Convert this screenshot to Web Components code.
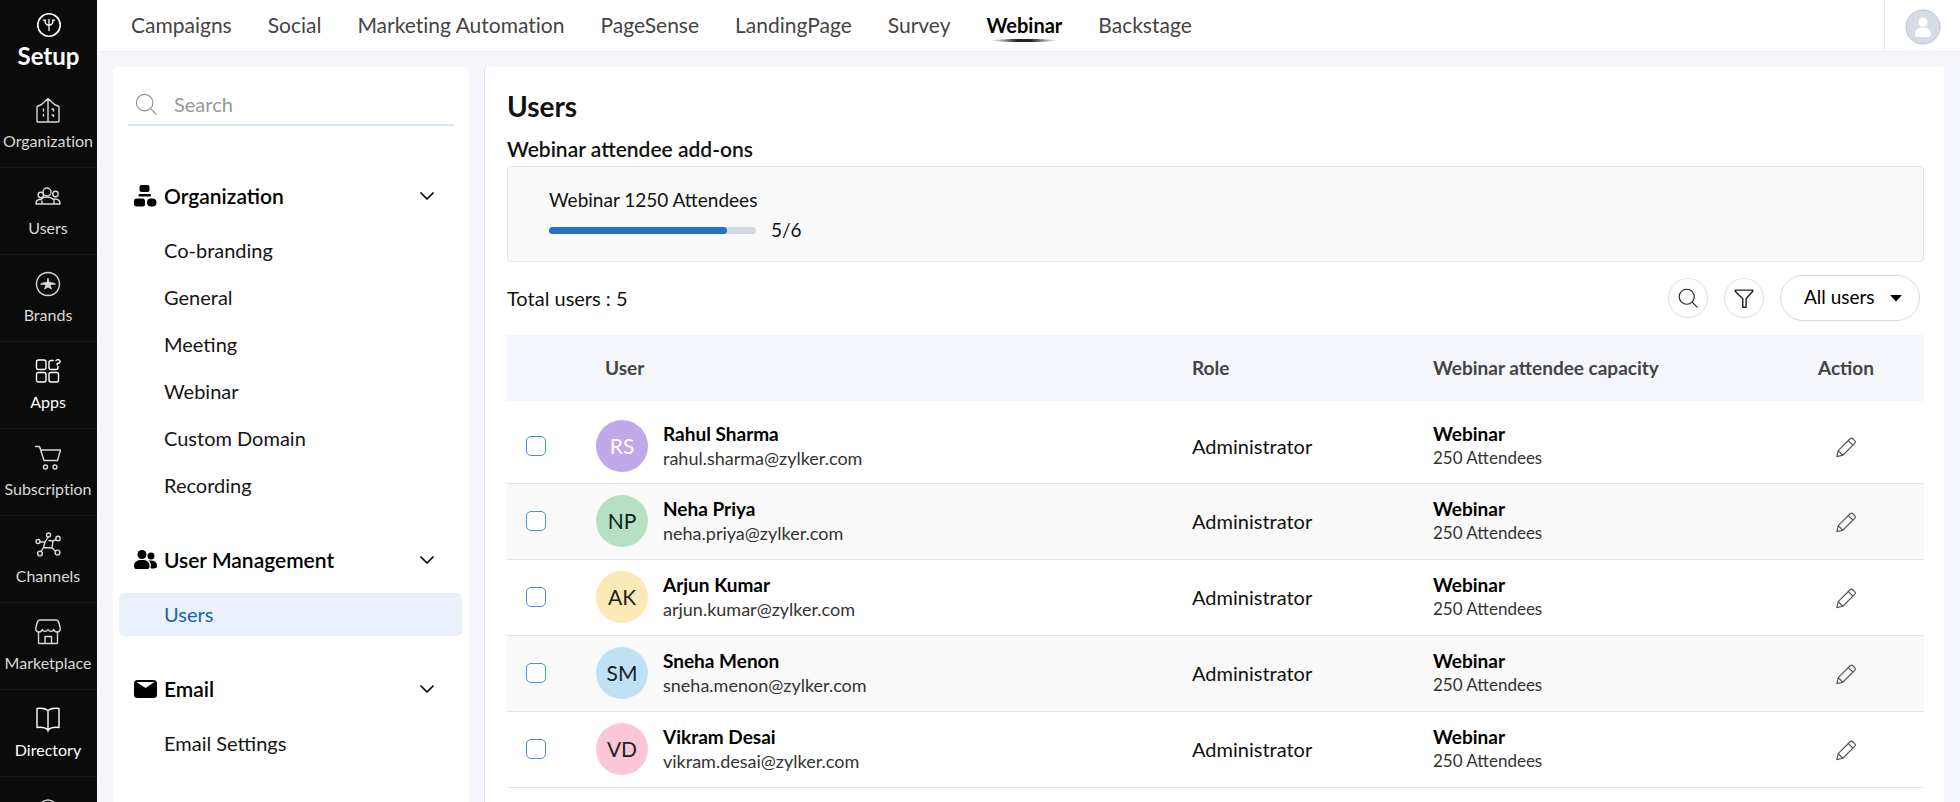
<!DOCTYPE html>
<html lang="en">
<head>
<meta charset="utf-8">
<title>Setup - Users</title>
<style>
    body{
        margin:0;
        background:#f4f6fb;
        color:#111;
        font-family:Lato, "Liberation Sans", sans-serif;
        font-size:20px;
        line-height:24px;
    }
</style>
</head>
<body>
<setup-app>
    <side-rail slot="rail">
        <rail-item icon="organization">Organization</rail-item>
        <rail-item icon="users">Users</rail-item>
        <rail-item icon="brands">Brands</rail-item>
        <rail-item icon="apps" bright>Apps</rail-item>
        <rail-item icon="cart">Subscription</rail-item>
        <rail-item icon="channels">Channels</rail-item>
        <rail-item icon="store">Marketplace</rail-item>
        <rail-item icon="book" bright>Directory</rail-item>
        <rail-item icon="ring"></rail-item>
    </side-rail>
    <top-bar slot="top">
        <top-link>Campaigns</top-link>
        <top-link>Social</top-link>
        <top-link>Marketing Automation</top-link>
        <top-link>PageSense</top-link>
        <top-link>LandingPage</top-link>
        <top-link>Survey</top-link>
        <top-link current>Webinar</top-link>
        <top-link>Backstage</top-link>
    </top-bar>
    <side-menu slot="menu">
        <menu-section icon="sitemap" heading="Organization">
            <menu-link>Co-branding</menu-link>
            <menu-link>General</menu-link>
            <menu-link>Meeting</menu-link>
            <menu-link>Webinar</menu-link>
            <menu-link>Custom Domain</menu-link>
            <menu-link>Recording</menu-link>
        </menu-section>
        <menu-section icon="people" heading="User Management">
            <menu-link current>Users</menu-link>
        </menu-section>
        <menu-section icon="mail" heading="Email">
            <menu-link>Email Settings</menu-link>
        </menu-section>
    </side-menu>
    <users-page>
        <addon-card slot="addons" used="5" total="6">Webinar 1250 Attendees</addon-card>
        <users-toolbar slot="toolbar">Total users : 5</users-toolbar>
        <users-table slot="table"></users-table>
    </users-page>
</setup-app>

<script>
const icons = {
    logo:['0 0 24 24', 24, `<circle cx="12" cy="12" r="11.2" stroke-width="1.6"/><path d="M12 6.500v11M8 7.500c0 3 1.500 4.500 4 5 2.500-.5 4-2 4-5M6.500 7.200h2M15.500 7.200h2" stroke-width="1.300"/>`],
    organization:['0 0 26 26', 26, `<path d="M2 9.500 6.500 7.500 13 1.500l6.500 6L24 9.500V24a1 1 0 0 1-1 1H3a1 1 0 0 1-1-1zM13 2v23"/><path d="M8.500 12v2M8.500 17.500v1.500M17 12h1.500v2M17 18h1.500v1.500"/>`],
    users:['0 0 26 26', 26, `<circle cx="12" cy="8" r="4"/><circle cx="5.800" cy="11" r="2.700"/><circle cx="20.500" cy="10" r="2.700"/><path d="M4 15.500c-2 .5-3 2-3 4.500h24c0-2.500-1-4.500-4-5-1.500-.2-2 .2-3.200.2-1-1.500-3-2.200-5.800-2.200-3 0-5 1-6 2.500zM7 17v3M19 15v5"/>`],
    brands:['0 0 26 26', 26, `<circle cx="13" cy="13" r="11.500"/><path d="m13 7.500 1.300 4 4.200.5-3.500 2 1.500 4-3.500-2-3.500 2 1.500-4-3.500-2 4.200-.5z" fill="currentColor" stroke-width=".8"/><path d="M6 13h14"/>`],
    apps:['0 0 26 26', 26, `<rect x="1.500" y="2" width="9.500" height="9.500" rx="2"/><rect x="1.500" y="14.500" width="9.500" height="9.500" rx="2"/><rect x="14" y="14.500" width="9.500" height="9.500" rx="2"/><path d="M18 2.500h-2a2 2 0 0 0-2 2v5a2 2 0 0 0 2 2h5a2 2 0 0 0 2-2V8.500M21 2.500c2-1.800 4.500-.5 4 1.500-.3 1-1.500 1.500-2.800 1.500v1.500"/>`],
    cart:['0 0 26 26', 26, `<path d="M.5 1.500h4L9 15.500h13.500L25.500 5H6"/><circle cx="10.500" cy="22" r="2"/><circle cx="20" cy="22" r="2"/>`],
    channels:['0 0 26 26', 26, `<circle cx="13.500" cy="3" r="2"/><circle cx="3" cy="9.500" r="2"/><circle cx="23" cy="6.500" r="2.200"/><circle cx="5" cy="21.500" r="2.400"/><circle cx="22.500" cy="20.500" r="2.400"/><path d="M5 10h5l3-5M10 10l-1.500 5.500-2.500 4M8.500 15.500 17 16l3.500 3M17 16l1-7 3-1.500M18 9l-4-.5"/>`],
    store:['0 0 26 26', 26, `<path d="M5 1h16c2 0 2.500 1 3 3l1.300 5.500c0 2-1.300 3.500-3.300 3.500-1.500 0-2.800-.8-3.300-2.500-.7 1.700-1.500 2-2.700 2s-2.300-.8-3-2c-.7 1.200-1.800 2-3 2s-2-.3-2.700-2C6.800 12.200 5.500 13 4 13 2 13 .7 11.500.7 9.500L2 4c.5-2 1-3 3-3zM3.500 13v10.500a1 1 0 0 0 1 1h17a1 1 0 0 0 1-1V13M10 24.500v-7h6.500v7"/>`],
    book:['0 0 26 26', 26, `<path d="M13 4.500C10.500 2.500 6 2 2 2.500v19c4-.5 8.500 0 11 2.500 2.500-2.500 7-3 11-2.500v-19c-4-.5-8.500 0-11 2zM13 4.500v21"/>`],
    ring:['0 0 26 26', 26, `<circle cx="13" cy="16" r="9"/>`],
    search:['0 0 24 24', 24, `<circle cx="10.500" cy="10.500" r="9"/><path d="m17 17 6 6"/>`],
    filter:['0 0 24 24', 24, `<path d="M1.500 2.500h21v1.500L14.500 13v10h-4V13L1.500 4z" stroke-width="1.700"/>`],
    chevron:['0 0 14 14', 14, `<path d="m1 4 6 6 6-6" stroke-width="1.700"/>`],
    caret:['0 0 12 8', 12, `<path d="M0 1h12L6 7.500z" fill="currentColor" stroke="none"/>`],
    pencil:['0 0 24 24', 24, `<path d="M2 22.500 3.500 16 16.500 3a2 2 0 0 1 3 0l2 2a2 2 0 0 1 0 3L8.500 21zM14.500 5l5 5M3.500 16l5 5"/>`],
    sitemap:['0 0 24 24', 24, `<g fill="currentColor" stroke="none"><rect x="6.500" y="1" width="10" height="7" rx="2"/><rect x="5.500" y="10" width="12.500" height="2.500" rx="1"/><rect x="1" y="14.500" width="11" height="8" rx="2.500"/><rect x="14" y="14.500" width="9.500" height="8" rx="4"/></g>`],
    people:['0 0 24 24', 24, `<g fill="currentColor" stroke="none"><circle cx="9" cy="6.500" r="4.500"/><circle cx="18" cy="8" r="3.500"/><path d="M1 17.500c0-3.500 3-5.500 8-5.500s7.500 2 7.500 5.500-1 3.500-3 3.500H4c-2 0-3-.5-3-3.500z"/><path d="M15.500 12.500c5-.5 8.500 1 8.500 5 0 2.500-1 3-5.500 3-.5 0-1-.2-1-.5.800-3.500.3-5.500-2-7.500z"/></g>`],
    mail:['0 0 24 24', 24, `<rect x="1" y="3" width="23" height="18" rx="3.500" fill="currentColor" stroke="none"/><path d="M3.500 5h18L12.500 11z" fill="#fff" stroke="none"/>`],
    person:['0 0 36 36', 36, `<circle cx="18" cy="18" r="17" fill="#d6dbe6" stroke="#bcc2d0" stroke-width="1"/><circle cx="18" cy="13" r="4.500" fill="#fff" stroke="none"/><path d="M10 25c0-4 2.500-6.500 8-6.500s8 2.500 8 6.500c0 2-1 3-3 3H13c-2 0-3-1-3-3z" fill="#fff" stroke="none"/>`]
};

class AppIcon extends HTMLElement{
    connectedCallback(){
        if(this.shadowRoot) return;
        const [box, width, shape] = icons[this.getAttribute('name')];
        this.attachShadow({mode:'open'}).innerHTML = `
<style>
    :host{
        display:block;
        flex:none;
        width:var(--size, ${width}px);
    }
    svg{
        display:block;
        width:100%;
        fill:none;
        stroke:currentColor;
        stroke-width:var(--stroke, 1.4);
        stroke-linecap:round;
        stroke-linejoin:round;
    }
</style>
<svg viewBox="${box}" aria-hidden="true">${shape}</svg>
`;
    }
}

class SetupApp extends HTMLElement{
    constructor(){
        super();
        this.attachShadow({mode:'open'}).innerHTML = `
<style>
    :host{
        display:grid;
        grid-template-columns:98px minmax(0, 1fr);
        height:100vh;
    }
    .right{
        display:flex;
        flex-direction:column;
        min-height:0;
    }
    .content{
        flex:1;
        display:flex;
        gap:15px;
        min-height:0;
        padding:15px 16px 0 15px;
    }
</style>
<slot name="rail"></slot>
<div class="right">
    <slot name="top"></slot>
    <div class="content">
        <slot name="menu"></slot>
        <slot></slot>
    </div>
</div>
`;
    }
}

class SideRail extends HTMLElement{
    constructor(){
        super();
        this.attachShadow({mode:'open'}).innerHTML = `
<style>
    :host{
        display:block;
        overflow:hidden;
        background:#0b0b0b;
        color:#fff;
        border-right:1px solid #fff;
    }
    header{
        display:flex;
        flex-direction:column;
        align-items:center;
        gap:7px;
        height:68px;
        padding-top:13px;
        font-size:24px;
        font-weight:700;
    }
</style>
<header><app-icon name="logo"></app-icon>Setup</header>
<nav><slot></slot></nav>
`;
    }
}

class RailItem extends HTMLElement{
    constructor(){
        super();
        this.attachShadow({mode:'open'}).innerHTML = `
<style>
    :host{
        display:block;
        color:#d9d9d9;
        font-size:16px;
        line-height:20px;
        font-variant-ligatures:none;
        border-bottom:1px solid #171717;
    }
    :host([bright]){
        color:#fff;
    }
    a{
        display:flex;
        flex-direction:column;
        align-items:center;
        gap:8px;
        height:70px;
        padding:16px 1px 0 0;
        color:inherit;
        text-decoration:none;
    }
</style>
<a href="#"><app-icon name="${this.getAttribute('icon')}"></app-icon><slot></slot></a>
`;
    }
}

class TopBar extends HTMLElement{
    constructor(){
        super();
        this.attachShadow({mode:'open'}).innerHTML = `
<style>
    :host{
        display:flex;
        align-items:stretch;
        height:51px;
        background:#fff;
        border-bottom:1px solid #eceef2;
    }
    nav{
        flex:1;
        display:flex;
        gap:36px;
        padding-left:33px;
    }
    button{
        display:flex;
        align-items:center;
        padding:2px 19px 0 20px;
        border:0;
        border-left:1px solid #e6e8ee;
        background:none;
    }
</style>
<nav><slot></slot></nav>
<button type="button" aria-label="Profile"><app-icon name="person"></app-icon></button>
`;
    }
}

class TopLink extends HTMLElement{
    constructor(){
        super();
        this.attachShadow({mode:'open'}).innerHTML = `
<style>
    :host{
        display:block;
        color:#444;
        font-size:21px;
        font-variant-ligatures:none;
    }
    a{
        display:flex;
        flex-direction:column;
        align-items:center;
        gap:2px;
        padding-top:13px;
        color:inherit;
        text-decoration:none;
    }
    :host([current]){
        color:#000;
        font-size:20px;
        font-weight:700;
    }
    :host([current]) a::after{
        content:"";
        width:66px;
        height:3px;
        border-radius:50%;
        background:linear-gradient(90deg, #fff, #222 40%, #222 60%, #fff);
    }
</style>
<a href="#"><slot></slot></a>
`;
    }
}

class SideMenu extends HTMLElement{
    constructor(){
        super();
        this.attachShadow({mode:'open'}).innerHTML = `
<style>
    :host{
        display:block;
        flex:none;
        width:356px;
        box-sizing:border-box;
        padding:10px 7px 0 6px;
        background:#fff;
        border-radius:4px 4px 0 0;
        overflow:hidden;
    }
    label{
        display:flex;
        align-items:center;
        gap:17px;
        height:41px;
        margin:0 8px 47px 9px;
        padding:6px 0 0 7px;
        border-bottom:2px solid #d8e5f8;
        color:#8b8b90;
        --size:22px;
        --stroke:1.2;
    }
    input{
        flex:1;
        min-width:0;
        padding:0;
        border:0;
        outline:0;
        background:none;
        font:inherit;
        color:#111;
    }
    input::placeholder{
        color:#97979b;
        opacity:1;
    }
    nav{
        display:flex;
        flex-direction:column;
        gap:30px;
    }
</style>
<label><app-icon name="search"></app-icon><input type="search" placeholder="Search" aria-label="Search"></label>
<nav><slot></slot></nav>
`;
    }
}

class MenuSection extends HTMLElement{
    constructor(){
        super();
        this.attachShadow({mode:'open'}).innerHTML = `
<style>
    :host{
        display:block;
    }
    h2{
        margin:0 0 10px;
        font:inherit;
    }
    button{
        display:flex;
        align-items:center;
        gap:7px;
        width:100%;
        height:46px;
        padding:0 28px 0 14px;
        border:0;
        background:none;
        color:#000;
        font:inherit;
        font-size:21px;
        font-weight:600;
    }
    .heading{
        flex:1;
        text-align:left;
    }
    .links{
        display:flex;
        flex-direction:column;
        gap:4px;
    }
</style>
<h2><button type="button" aria-expanded="true">
    <app-icon name="${this.getAttribute('icon')}"></app-icon>
    <span class="heading">${this.getAttribute('heading')}</span>
    <app-icon name="chevron"></app-icon>
</button></h2>
<div class="links"><slot></slot></div>
`;
    }
}

class MenuLink extends HTMLElement{
    constructor(){
        super();
        this.attachShadow({mode:'open'}).innerHTML = `
<style>
    :host{
        display:block;
    }
    a{
        display:block;
        padding-left:45px;
        border-radius:5px;
        color:#151515;
        line-height:43px;
        text-decoration:none;
    }
    :host([current]) a{
        background:#eaf1fd;
        color:#1263b8;
    }
</style>
<a href="#"><slot></slot></a>
`;
    }
}

class UsersPage extends HTMLElement{
    constructor(){
        super();
        this.attachShadow({mode:'open'}).innerHTML = `
<style>
    :host{
        display:block;
        flex:1;
        min-width:0;
        padding:21px 20px 0 22px;
        background:#fff;
        border-left:1px solid #dde1ea;
        border-radius:4px 4px 0 0;
        overflow:hidden;
    }
    h1{
        margin:0 0 13px;
        font-size:28px;
        line-height:36px;
    }
    h2{
        margin:0 0 5px;
        font-size:21px;
        font-weight:600;
        line-height:24px;
    }
</style>
<h1>Users</h1>
<h2>Webinar attendee add-ons</h2>
<slot name="addons"></slot>
<slot name="toolbar"></slot>
<slot name="table"></slot>
`;
    }
}

class AddonCard extends HTMLElement{
    constructor(){
        super();
        const used = this.getAttribute('used');
        const total = this.getAttribute('total');
        this.attachShadow({mode:'open'}).innerHTML = `
<style>
    :host{
        display:block;
        height:73px;
        padding:21px 41px 0;
        background:#f9f9f9;
        border:1px solid #dfe4ec;
        border-radius:4px;
        font-size:19px;
    }
    .usage{
        display:flex;
        align-items:center;
        gap:15px;
        margin-top:6px;
    }
    .track{
        width:207px;
        height:7px;
        border-radius:4px;
        background:#d3d8e1;
    }
    .fill{
        width:86%;
        height:100%;
        border-radius:4px;
        background:#2272c3;
    }
</style>
<div><slot></slot></div>
<div class="usage">
    <div class="track" role="progressbar" aria-label="Attendees" aria-valuenow="${used}" aria-valuemax="${total}"><div class="fill"></div></div>
    <span>${used}/${total}</span>
</div>
`;
    }
}

class UsersToolbar extends HTMLElement{
    constructor(){
        super();
        this.attachShadow({mode:'open'}).innerHTML = `
<style>
    :host{
        display:flex;
        align-items:center;
        height:71px;
        padding-bottom:2px;
    }
    .total{
        flex:1;
    }
    button{
        display:grid;
        place-items:center;
        width:40px;
        height:40px;
        margin-right:16px;
        padding:0;
        border:1px solid #dcdfe8;
        border-radius:50%;
        background:#fff;
        color:#222;
        --size:20px;
    }
    .select{
        display:grid;
        grid-template-columns:1fr auto;
        align-items:center;
        margin-right:4px;
        color:#000;
    }
    select{
        grid-area:1 / 1 / 2 / 3;
        width:140px;
        height:46px;
        padding:0 36px 2px 23px;
        border:1px solid #d5d9e4;
        border-radius:23px;
        background:#fff;
        color:inherit;
        font:inherit;
        font-size:19px;
        appearance:none;
    }
    .select app-icon{
        grid-area:1 / 2 / 2 / 3;
        margin-right:18px;
        pointer-events:none;
        z-index:1;
    }
</style>
<span class="total"><slot></slot></span>
<button type="button" aria-label="Search users"><app-icon name="search"></app-icon></button>
<button type="button" aria-label="Filter users"><app-icon name="filter"></app-icon></button>
<div class="select">
    <select aria-label="Show"><option>All users</option></select>
    <app-icon name="caret"></app-icon>
</div>
`;
    }
}

class UserAvatar extends HTMLElement{
    constructor(){
        super();
        this.attachShadow({mode:'open'}).innerHTML = `
<style>
    :host{
        display:grid;
        place-items:center;
        flex:none;
        width:52px;
        height:52px;
        border-radius:50%;
        font-size:21px;
    }
</style>
<slot></slot>
`;
    }
}

const users = [
    {name:'Rahul Sharma', email:'rahul.sharma@zylker.com', initials:'RS', back:'#c0a9eb', fore:'#fff'},
    {name:'Neha Priya', email:'neha.priya@zylker.com', initials:'NP', back:'#b5e0c3', fore:'#16211a'},
    {name:'Arjun Kumar', email:'arjun.kumar@zylker.com', initials:'AK', back:'#fde9b5', fore:'#222'},
    {name:'Sneha Menon', email:'sneha.menon@zylker.com', initials:'SM', back:'#bfe1f3', fore:'#16202a'},
    {name:'Vikram Desai', email:'vikram.desai@zylker.com', initials:'VD', back:'#fac6d8', fore:'#222'}
];

class UsersTable extends HTMLElement{
    constructor(){
        super();
        this.attachShadow({mode:'open'}).innerHTML = `
<style>
    :host{
        display:block;
    }
    table{
        width:100%;
        border-collapse:separate;
        border-spacing:0;
        table-layout:fixed;
    }
    th, td{
        padding:0;
        text-align:left;
    }
    th{
        height:66px;
        background:#f4f6fc;
        color:#444;
        font-size:19px;
        font-weight:700;
    }
    th.user{
        padding-left:9px;
    }
    .check{ width:89px; }
    .role{ width:241px; }
    .capacity{ width:335px; }
    .action{ width:156px; text-align:center; }
    td{
        box-sizing:border-box;
        height:76px;
        padding-bottom:2px;
        border-bottom:1px solid #e2e3e5;
    }
    tbody tr:first-child td{
        height:83px;
        padding-top:9px;
    }
    tbody tr:nth-child(even) td{
        background:#f9f9f9;
    }
    input{
        display:block;
        width:20px;
        height:20px;
        margin:0 0 0 19px;
        border:1px solid #4d8fd6;
        border-radius:5px;
        background:#fff;
        appearance:none;
    }
    .person{
        display:flex;
        align-items:center;
        gap:15px;
    }
    .name{
        color:#000;
        font-size:19px;
        font-weight:700;
    }
    .detail{
        color:#333;
        font-size:18px;
    }
    .detail.small{
        font-size:17px;
    }
    button{
        padding:0;
        border:0;
        background:none;
        color:#555;
        vertical-align:middle;
        --size:22px;
        --stroke:1.3;
    }
</style>
<table>
    <thead>
        <tr>
            <th class="check"></th>
            <th class="user">User</th>
            <th class="role">Role</th>
            <th class="capacity">Webinar attendee capacity</th>
            <th class="action">Action</th>
        </tr>
    </thead>
    <tbody>${users.map(user => this.#row(user)).join('')}</tbody>
</table>
`;
    }

    #row(user){
        return `
        <tr>
            <td><input type="checkbox" aria-label="Select ${user.name}"></td>
            <td>
                <div class="person">
                    <user-avatar style="background:${user.back};color:${user.fore}">${user.initials}</user-avatar>
                    <div><div class="name">${user.name}</div><div class="detail">${user.email}</div></div>
                </div>
            </td>
            <td>Administrator</td>
            <td><div class="name">Webinar</div><div class="detail small">250 Attendees</div></td>
            <td class="action"><button type="button" aria-label="Edit ${user.name}"><app-icon name="pencil"></app-icon></button></td>
        </tr>`;
    }
}

customElements.define('app-icon', AppIcon);
customElements.define('setup-app', SetupApp);
customElements.define('side-rail', SideRail);
customElements.define('rail-item', RailItem);
customElements.define('top-bar', TopBar);
customElements.define('top-link', TopLink);
customElements.define('side-menu', SideMenu);
customElements.define('menu-section', MenuSection);
customElements.define('menu-link', MenuLink);
customElements.define('users-page', UsersPage);
customElements.define('addon-card', AddonCard);
customElements.define('users-toolbar', UsersToolbar);
customElements.define('user-avatar', UserAvatar);
customElements.define('users-table', UsersTable);
</script>
</body>
</html>
